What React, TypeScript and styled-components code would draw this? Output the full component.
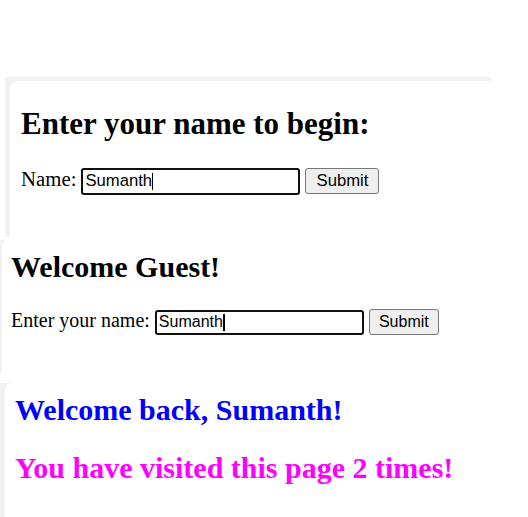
import React from "react";
import styled, { createGlobalStyle } from "styled-components";

const GlobalStyle = createGlobalStyle`
  html, body { margin: 0; padding: 0; background: #ffffff; }
  body {
    font-family: "Liberation Serif", "Times New Roman", serif;
    color: #000000;
  }
`;

const Page = styled.main`
  display: flex;
  flex-direction: column;
  width: 528px;
  height: 517px;
  overflow: hidden;
`;

const TopSpace = styled.div`
  height: 77px;
  flex: none;
`;

const Shot = styled.section<{
  $inset: number;
  $frameTop: number;
  $frameLeft: number;
  $height: number;
  $width?: number;
  $gapBefore: number;
  $radius: number;
}>`
  flex: none;
  box-sizing: border-box;
  display: flex;
  margin-left: ${(p) => p.$inset}px;
  margin-top: ${(p) => p.$gapBefore}px;
  width: ${(p) => (p.$width ? `${p.$width}px` : "auto")};
  height: ${(p) => p.$height}px;
  padding-top: ${(p) => p.$frameTop}px;
  padding-left: ${(p) => p.$frameLeft}px;
  background: #f1f1f1;

  & > div {
    border-top-left-radius: ${(p) => p.$radius}px;
  }
`;

const Card = styled.div<{ $padTop: number; $padLeft: number }>`
  flex: 1;
  display: flex;
  flex-direction: column;
  align-items: flex-start;
  background: #ffffff;
  padding-top: ${(p) => p.$padTop}px;
  padding-left: ${(p) => p.$padLeft}px;
`;

const Heading = styled.h2<{ $color?: string; $below: number; $size?: number }>`
  margin: 0 0 ${(p) => p.$below}px 0;
  font-size: ${(p) => p.$size ?? 30}px;
  line-height: 34px;
  font-weight: bold;
  color: ${(p) => p.$color ?? "#000000"};
  white-space: nowrap;
`;

const FormRow = styled.div<{ $fs: number }>`
  display: flex;
  align-items: baseline;
  font-size: ${(p) => p.$fs}px;
  line-height: 23px;
  white-space: nowrap;
`;

const Label = styled.label<{ $gap: number }>`
  margin-right: ${(p) => p.$gap}px;
`;

const InputWrap = styled.span`
  position: relative;
  display: inline-flex;
  margin-right: 5px;
`;

const TextInput = styled.input<{ $w: number; $h: number; $fs: number; $padX: number }>`
  box-sizing: border-box;
  width: ${(p) => p.$w}px;
  height: ${(p) => p.$h}px;
  padding: 0 ${(p) => p.$padX}px;
  border: 2px solid #111111;
  border-radius: 3px;
  outline: none;
  background: #ffffff;
  color: #000000;
  font-family: "Liberation Sans", Arial, sans-serif;
  font-size: ${(p) => p.$fs}px;
`;

const CaretLayer = styled.span<{ $fs: number; $padX: number }>`
  position: absolute;
  inset: 0;
  display: flex;
  align-items: center;
  padding-left: ${(p) => p.$padX + 2}px;
  font-family: "Liberation Sans", Arial, sans-serif;
  font-size: ${(p) => p.$fs}px;
  pointer-events: none;
`;

const Ghost = styled.span`
  color: transparent;
`;

const Caret = styled.span<{ $thick: number }>`
  display: inline-block;
  width: ${(p) => p.$thick}px;
  height: 17px;
  background: #000000;
`;

const SubmitButton = styled.button<{ $w: number; $h: number; $fs: number }>`
  box-sizing: border-box;
  width: ${(p) => p.$w}px;
  height: ${(p) => p.$h}px;
  padding: 0;
  background: #efefef;
  border: 1px solid #767676;
  border-radius: 3px;
  color: #000000;
  font-family: "Liberation Sans", Arial, sans-serif;
  font-size: ${(p) => p.$fs}px;
`;

type FieldProps = {
  w: number;
  h: number;
  fs: number;
  padX: number;
  thick: number;
  btnW: number;
};

function NameField({ w, h, fs, padX, thick, btnW }: FieldProps) {
  const value = "Sumanth";
  return (
    <>
      <InputWrap>
        <TextInput
          type="text"
          defaultValue={value}
          $w={w}
          $h={h}
          $fs={fs}
          $padX={padX}
        />
        <CaretLayer $fs={fs} $padX={padX}>
          <Ghost>{value}</Ghost>
          <Caret $thick={thick} />
        </CaretLayer>
      </InputWrap>
      <SubmitButton type="button" $w={btnW} $h={26} $fs={fs}>
        Submit
      </SubmitButton>
    </>
  );
}

export default function App() {
  return (
    <>
      <GlobalStyle />
      <Page>
        <TopSpace />

        <Shot
          $inset={5}
          $width={486}
          $height={160}
          $frameTop={4}
          $frameLeft={5}
          $gapBefore={0}
          $radius={8}
        >
          <Card $padTop={26} $padLeft={11}>
            <Heading $size={31} $below={26}>
              Enter your name to begin:
            </Heading>
            <FormRow $fs={20.8}>
              <Label $gap={5}>Name:</Label>
              <NameField w={219} h={27} fs={16.67} padX={2} thick={1} btnW={74} />
            </FormRow>
          </Card>
        </Shot>

        <Shot
          $inset={0}
          $height={133}
          $frameTop={0}
          $frameLeft={2}
          $gapBefore={3}
          $radius={6}
        >
          <Card $padTop={10} $padLeft={9}>
            <Heading $below={25}>Welcome Guest!</Heading>
            <FormRow $fs={20}>
              <Label $gap={5}>Enter your name:</Label>
              <NameField w={209} h={25} fs={16} padX={2} thick={2} btnW={70} />
            </FormRow>
          </Card>
        </Shot>

        <Shot
          $inset={0}
          $height={140}
          $frameTop={0}
          $frameLeft={5}
          $gapBefore={10}
          $radius={8}
        >
          <Card $padTop={10} $padLeft={10}>
            <Heading $color="#0000ff" $below={24}>
              Welcome back, Sumanth!
            </Heading>
            <Heading $color="#ff00ff" $below={0}>
              You have visited this page 2 times!
            </Heading>
          </Card>
        </Shot>
      </Page>
    </>
  );
}
